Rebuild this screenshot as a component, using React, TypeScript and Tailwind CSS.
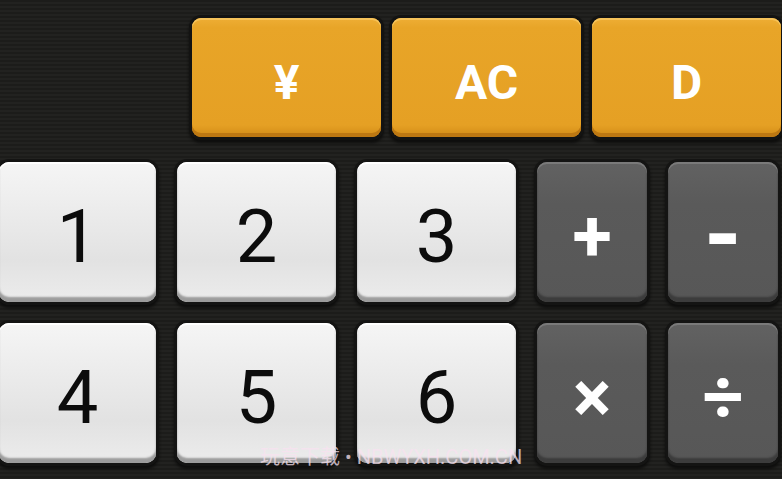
import React from "react";

const orange =
  "flex items-center justify-center pt-[10px] h-[119px] w-[189px] rounded-[9px] text-white font-bold text-[48px] leading-none bg-[linear-gradient(180deg,#eeae35_0%,#e8a528_8%,#e5a024_90%,#d18b16_100%)] shadow-[inset_0_2px_0_#f6c35a,inset_0_-4px_0_#bd7812,0_0_0_3px_#131312,0_3px_3px_3px_#0e0e0d]";

const white =
  "flex items-center justify-center pt-[10px] h-[140px] rounded-[10px] text-[#0c0c0c] text-[74px] leading-none bg-[linear-gradient(180deg,#f5f5f5_0%,#e9e9e9_45%,#e2e2e2_70%,#ececec_100%)] shadow-[inset_0_2px_0_#ffffff,inset_0_-5px_2px_#9c9c9c,0_0_0_3px_#141413,0_3px_3px_3px_#0e0e0d]";

const gray =
  "flex items-center justify-center pt-[10px] h-[140px] rounded-[10px] text-white font-bold leading-none bg-[linear-gradient(180deg,#626262_0%,#5a5a5a_30%,#575757_100%)] shadow-[inset_0_2px_0_#7a7a7a,inset_0_-5px_2px_#3c3c3c,0_0_0_3px_#141413,0_3px_3px_3px_#0e0e0d]";

// operator glyphs need their own sizes to match the key art
const opSize: Record<string, string> = {
  "+": "text-[72px]",
  "-": "text-[96px] pb-[4px]",
  "×": "text-[72px]",
  "÷": "text-[72px]",
};

export default function App() {
  const rows = [
    ["1", "2", "3", "+", "-"],
    ["4", "5", "6", "×", "÷"],
  ];

  return (
    <div
      className="relative w-[782px] h-[479px] overflow-hidden bg-[repeating-linear-gradient(180deg,#1c1c1a_0px,#1c1c1a_2px,#222220_2px,#222220_4px)]"
      style={{ fontFamily: "Roboto, 'Noto Sans CJK SC', sans-serif" }}
    >
      <div className="flex gap-[11px] pl-[192px] pt-[18px]">
        <button className={orange}>¥</button>
        <button className={orange}>AC</button>
        <button className={orange}>D</button>
      </div>

      <div className="grid grid-cols-[157px_159px_159px_110px_110px] gap-x-[21px] gap-y-[21px] mt-[25px] -ml-[1px]">
        {rows.map((r, i) =>
          r.map((k, j) => (
            <button key={i + "-" + j} className={j < 3 ? white : gray + " " + opSize[k]}>
              {k}
            </button>
          ))
        )}
      </div>

      <div className="absolute left-[260px] top-[447px] text-[20px] leading-none text-[#f8e2f0]/75">
        玩意下载 • NBWYXH.COM.CN
      </div>
    </div>
  );
}
